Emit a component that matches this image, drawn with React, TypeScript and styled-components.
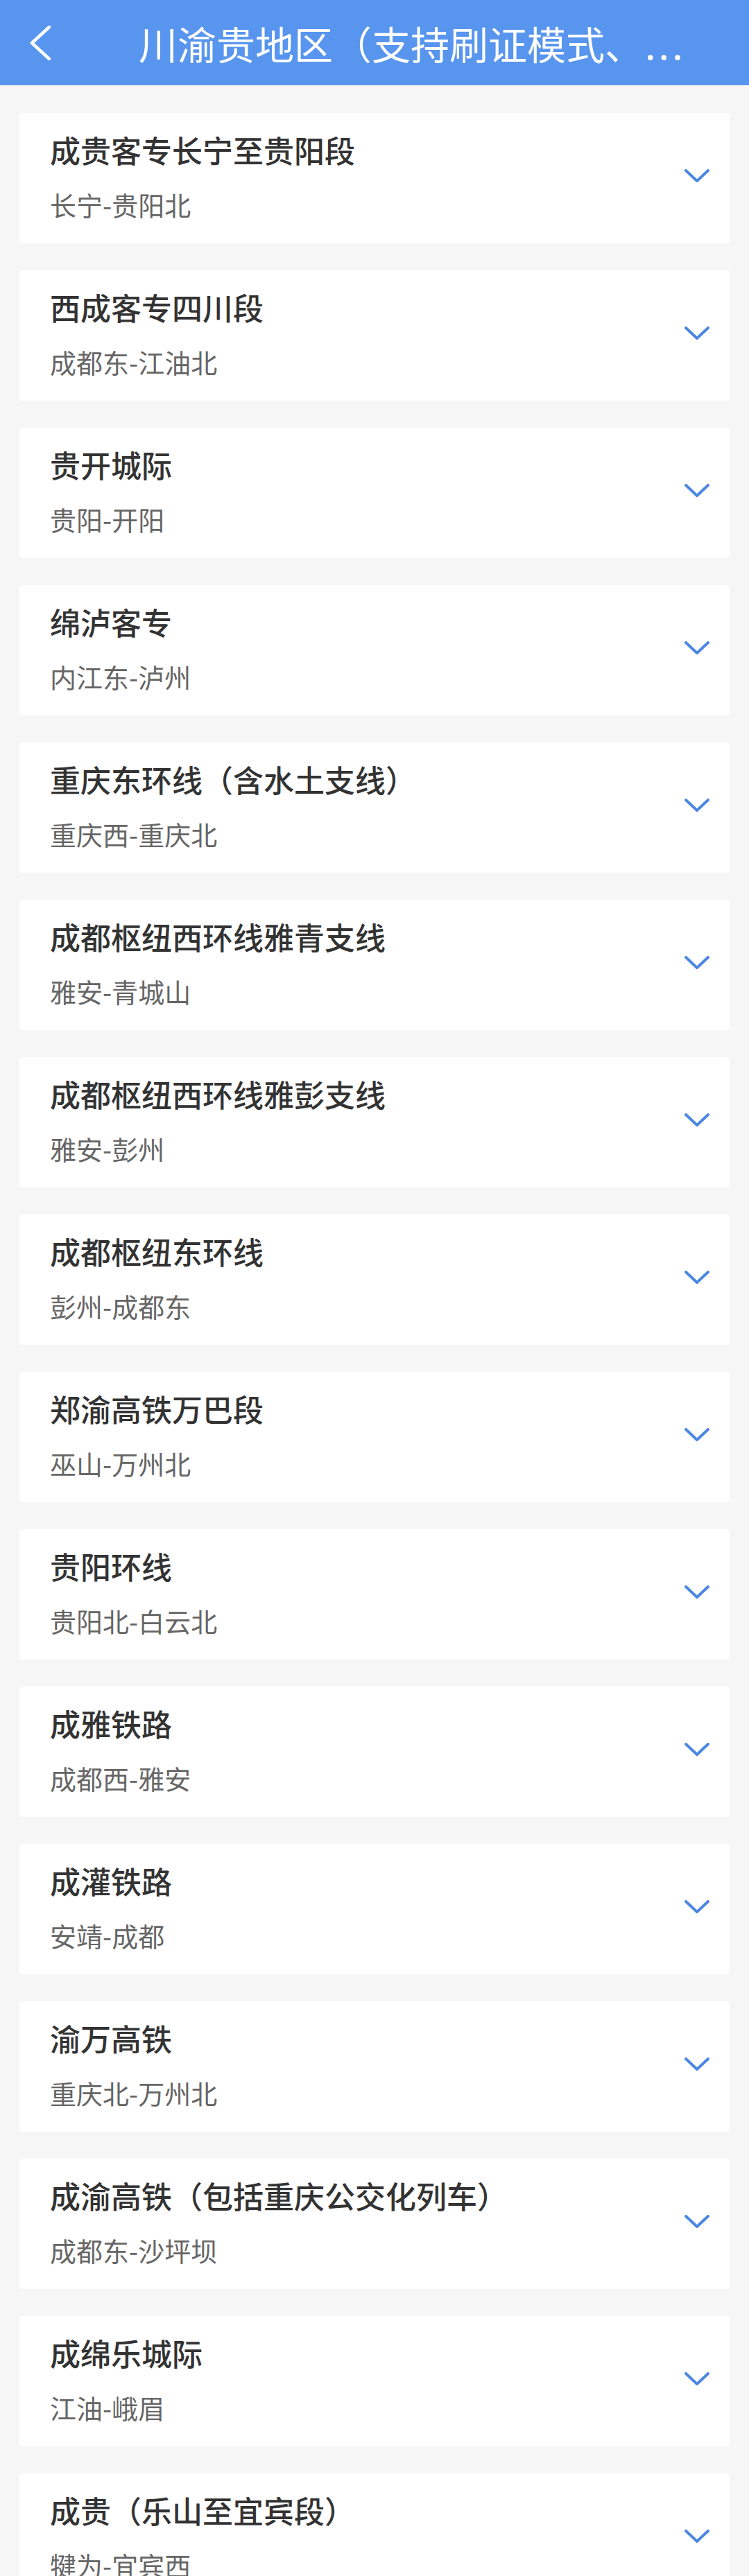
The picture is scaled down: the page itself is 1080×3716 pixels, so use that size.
import React from 'react';
import styled, { createGlobalStyle } from 'styled-components';

const GlobalStyle = createGlobalStyle`
  body {
    margin: 0;
    background: #f6f6f6;
    font-family: "Noto Sans CJK SC", "Noto Sans", sans-serif;
  }
`;

const Page = styled.div`
  min-height: 100vh;
  background: #f6f6f6;
`;

const Header = styled.header`
  height: 123px;
  background: #5895ee;
  display: flex;
  align-items: center;
`;

const BackButton = styled.button`
  width: 200px;
  height: 100%;
  padding: 0 0 0 42px;
  border: none;
  background: none;
  display: flex;
  align-items: center;
  cursor: pointer;
`;

const Title = styled.h1`
  margin: 0;
  font-size: 56px;
  font-weight: 400;
  line-height: 123px;
  color: #fff;
  white-space: nowrap;
`;

// the trailing dots sit on the baseline, unlike the centred CJK ellipsis glyph
const Dots = styled.span`
  margin-left: 2px;
  letter-spacing: 4px;
`;

const List = styled.div`
  display: flex;
  flex-direction: column;
  gap: 39px;
  padding: 40px 28px;
`;

const Card = styled.div`
  background: #fff;
  border-radius: 4px;
  display: flex;
  align-items: center;
  padding: 25px 29px 32px 44px;
`;

const Info = styled.div`
  flex: 1;
  display: flex;
  flex-direction: column;
`;

const LineName = styled.div`
  font-size: 44px;
  line-height: 56px;
  font-weight: 500;
  color: #333;
`;

const Stations = styled.div`
  margin-top: 27px;
  font-size: 38px;
  line-height: 48px;
  color: #666;
`;

const Chevron = () => (
  <svg width="36" height="20" viewBox="0 0 36 20" fill="none">
    <path d="M2 2 L18 17 L34 2" stroke="#4b87e2" strokeWidth="4" strokeLinecap="round" strokeLinejoin="round" />
  </svg>
);

const BackIcon = () => (
  <svg width="32" height="50" viewBox="0 0 32 50" fill="none">
    <path d="M29 2 L4 25 L29 48" stroke="#fff" strokeWidth="4.5" strokeLinecap="round" strokeLinejoin="round" />
  </svg>
);

const lines = [
  { name: '成贵客专长宁至贵阳段', route: '长宁-贵阳北' },
  { name: '西成客专四川段', route: '成都东-江油北' },
  { name: '贵开城际', route: '贵阳-开阳' },
  { name: '绵泸客专', route: '内江东-泸州' },
  { name: '重庆东环线（含水土支线）', route: '重庆西-重庆北' },
  { name: '成都枢纽西环线雅青支线', route: '雅安-青城山' },
  { name: '成都枢纽西环线雅彭支线', route: '雅安-彭州' },
  { name: '成都枢纽东环线', route: '彭州-成都东' },
  { name: '郑渝高铁万巴段', route: '巫山-万州北' },
  { name: '贵阳环线', route: '贵阳北-白云北' },
  { name: '成雅铁路', route: '成都西-雅安' },
  { name: '成灌铁路', route: '安靖-成都' },
  { name: '渝万高铁', route: '重庆北-万州北' },
  { name: '成渝高铁（包括重庆公交化列车）', route: '成都东-沙坪坝' },
  { name: '成绵乐城际', route: '江油-峨眉' },
  { name: '成贵（乐山至宜宾段）', route: '犍为-宜宾西' },
];

const App: React.FC = () => (
  <Page>
    <GlobalStyle />
    <Header>
      <BackButton aria-label="返回">
        <BackIcon />
      </BackButton>
      <Title>
        川渝贵地区（支持刷证模式、<Dots>...</Dots>
      </Title>
    </Header>
    <List>
      {lines.map((line) => (
        <Card key={line.name}>
          <Info>
            <LineName>{line.name}</LineName>
            <Stations>{line.route}</Stations>
          </Info>
          <Chevron />
        </Card>
      ))}
    </List>
  </Page>
);

export default App;
